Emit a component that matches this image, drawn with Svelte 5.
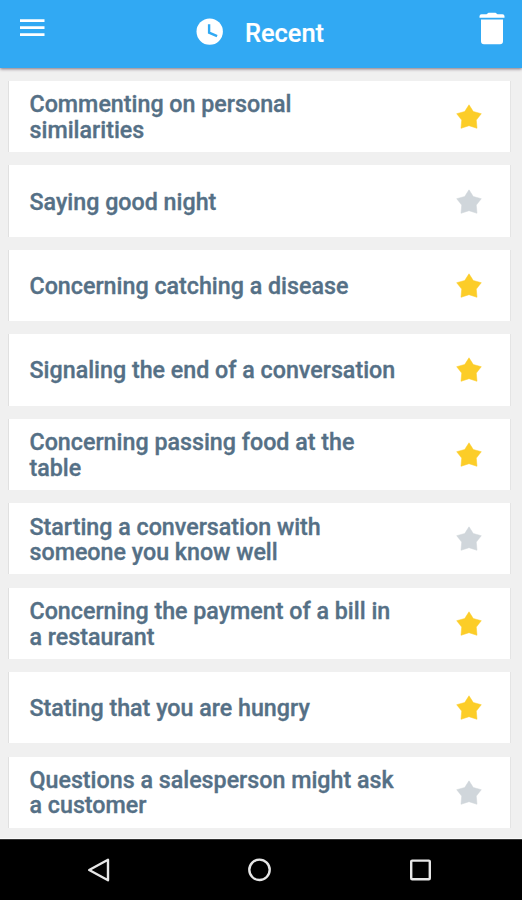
<script>
  const items = [
    { lines: ['Commenting on personal', 'similarities'], starred: true },
    { lines: ['Saying good night'], starred: false },
    { lines: ['Concerning catching a disease'], starred: true },
    { lines: ['Signaling the end of a conversation'], starred: true },
    { lines: ['Concerning passing food at the', 'table'], starred: true },
    { lines: ['Starting a conversation with', 'someone you know well'], starred: false },
    { lines: ['Concerning the payment of a bill in', 'a restaurant'], starred: true },
    { lines: ['Stating that you are hungry'], starred: true },
    { lines: ['Questions a salesperson might ask', 'a customer'], starred: false }
  ];
</script>

<div class="screen">
  <header>
    <button class="menu" aria-label="Menu">
      <svg width="26" height="18" viewBox="0 0 26 18"><path d="M0 .2h24.5v2.8H0zM0 7.2h24.5V10H0zM0 14.2h24.5V17H0z" fill="#fff" /></svg>
    </button>
    <div class="title">
      <svg width="28" height="28" viewBox="0 0 28 28">
        <circle cx="13.7" cy="13.6" r="13.2" fill="#fff" />
        <path d="M13.1 6.2v8.4l8 3.5" fill="none" stroke="#31a9f3" stroke-width="2.4" />
      </svg>
      <h1>Recent</h1>
    </div>
    <button class="trash" aria-label="Clear">
      <svg width="26" height="33" viewBox="0 0 26 33">
        <path d="M2.5 2.2h5L9.5 .8h7l2 1.4h5a2 2 0 0 1 2 2v1.6H.5V4.2a2 2 0 0 1 2-2zM2 7.6h22v21.6a3 3 0 0 1-3 3H5a3 3 0 0 1-3-3z" fill="#fff" />
      </svg>
    </button>
  </header>

  <main>
    {#each items as item}
      <article>
        <p>{#each item.lines as line}<span>{line}</span>{/each}</p>
        <svg class="star" class:starred={item.starred} width="26" height="25" viewBox="0 0 26 25">
          <path d="M13 .8l4.3 6.7 8 2.2-5 6.4.7 8.2-8-2.6-8 2.6.7-8.2-5-6.4 8-2.2z" />
        </svg>
      </article>
    {/each}
  </main>

  <nav>
    <svg width="24" height="26" viewBox="0 0 24 26"><path d="M21 2.8v20.4L2.2 13z" /></svg>
    <svg width="24" height="26" viewBox="0 0 24 26"><circle cx="11.5" cy="12.8" r="10.2" /></svg>
    <svg width="24" height="26" viewBox="0 0 24 26"><rect x="2.2" y="3.6" width="18.6" height="18.6" rx="1" /></svg>
  </nav>
</div>

<style>
  :global(body) { margin: 0; }
  .screen {
    width: 522px;
    height: 900px;
    display: flex;
    flex-direction: column;
    overflow: hidden;
    background: #f0f0f0;
    font-family: Roboto, sans-serif;
  }
  header {
    height: 68px;
    flex: none;
    box-sizing: border-box;
    display: grid;
    grid-template-columns: 60px 1fr 60px;
    align-items: start;
    background: #31a9f3;
    box-shadow: 0 1px 3px rgba(70, 45, 60, .65);
  }
  button { border: 0; padding: 0; background: none; display: flex; }
  svg { display: block; flex: none; }
  .menu { padding: 19px 0 0 20px; }
  .trash { padding: 12px 0 0 17px; }
  .title {
    display: flex;
    align-items: center;
    gap: 21px;
    padding: 18px 0 0 136px;
    height: 28px;
  }
  h1 {
    margin: 2px 0 0;
    color: #fff;
    font-size: 25.4px;
    line-height: 28px;
    font-weight: 500;
    -webkit-text-stroke: .2px #fff;
  }
  main {
    flex: 1;
    display: flex;
    flex-direction: column;
    gap: 13.15px;
    padding: 13px 12px 0 9px;
  }
  article {
    height: 71.3px;
    flex: none;
    box-sizing: border-box;
    display: flex;
    align-items: center;
    justify-content: space-between;
    padding: 0 28px 0 20.5px;
    background: #fff;
    box-shadow: -1px 0 #e0e0e0, 1px 0 #e4e4e4;
  }
  p {
    margin: 2.6px 0 0;
    color: #557086;
    font-size: 23.25px;
    line-height: 25.6px;
    font-weight: 500;
    white-space: nowrap;
    -webkit-text-stroke: .35px #557086;
  }
  p span { display: block; }
  .star { fill: #d0d6db; }
  .star path { stroke: #d0d6db; stroke-width: .5; stroke-linejoin: round; }
  .starred { fill: #fccd28; }
  .starred path { stroke: #fccd28; }
  nav {
    height: 61px;
    flex: none;
    box-sizing: border-box;
    display: flex;
    justify-content: space-between;
    align-items: center;
    padding: 0 89px 0 87px;
    background: #000;
    border-top: 1px solid #333;
    box-shadow: 0 -1px 0 #fafafa;
  }
  nav path, nav circle, nav rect {
    fill: none;
    stroke: #e6e6e6;
    stroke-width: 2.4;
    stroke-linejoin: round;
  }
</style>
